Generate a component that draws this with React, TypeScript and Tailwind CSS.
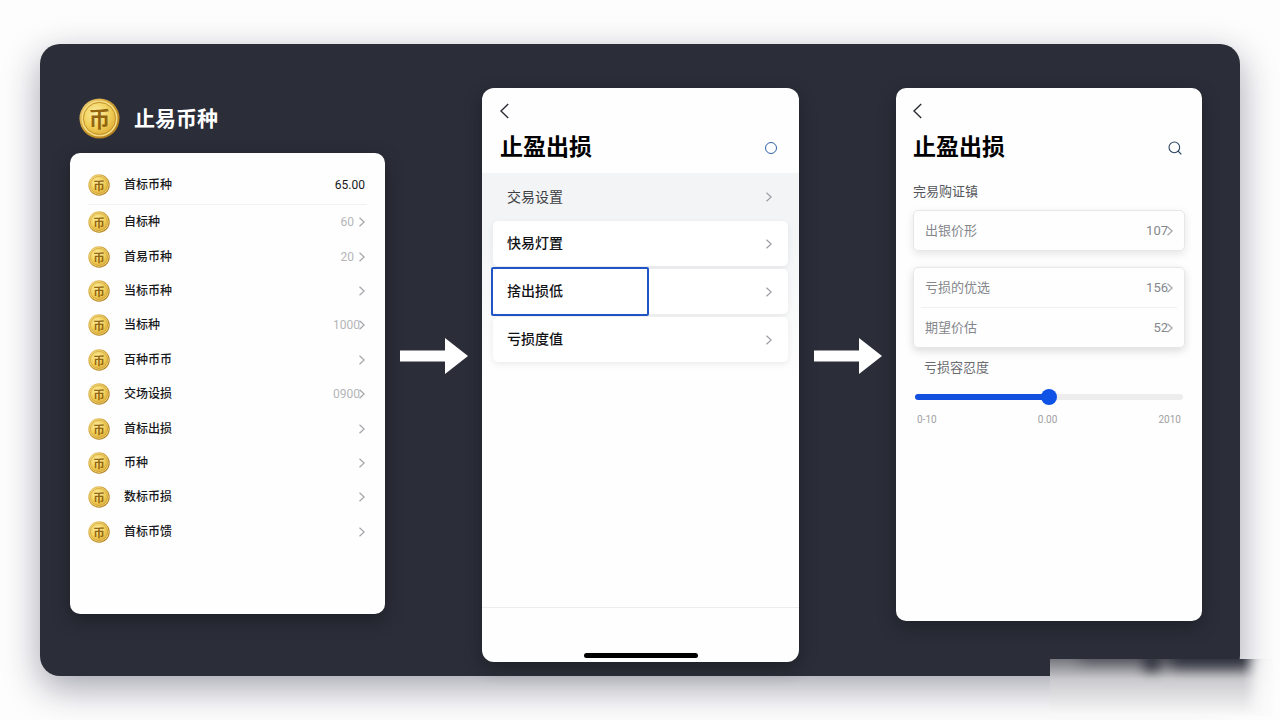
import { useState } from "react";
import { Search } from "lucide-react";

/**
 * A single row in the coin list
 * @interface CoinRow
 * @property {string} name - Label of the row
 * @property {string} value - Optional amount drawn on the right
 * @property {boolean} tight - Long amounts sit right up against the chevron
 */
interface CoinRow {
  name: string;
  value?: string;
  tight?: boolean;
}

const coins: CoinRow[] = [
  { name: "自标种", value: "60" },
  { name: "首易币种", value: "20" },
  { name: "当标币种" },
  { name: "当标种", value: "1000", tight: true },
  { name: "百种币币" },
  { name: "交场设损", value: "0900", tight: true },
  { name: "首标出损" },
  { name: "币种" },
  { name: "数标币损" },
  { name: "首标币馈" },
];

const settings = [
  { name: "快易灯置", selected: false },
  { name: "捨出损低", selected: true },
  { name: "亏损度值", selected: false },
];

/** Gold coin with the currency character in the middle */
function Coin({ className }: { className: string }) {
  return (
    <svg viewBox="0 0 42 42" className={className} aria-hidden="true">
      <defs>
        <linearGradient id="rim" x1="0" y1="0" x2="1" y2="1">
          <stop offset="0" stopColor="#f3d67a" />
          <stop offset="0.5" stopColor="#c9982e" />
          <stop offset="1" stopColor="#a87416" />
        </linearGradient>
        <radialGradient id="face" cx="0.4" cy="0.35" r="0.75">
          <stop offset="0" stopColor="#fdf0a8" />
          <stop offset="0.6" stopColor="#f0cd55" />
          <stop offset="1" stopColor="#d9a532" />
        </radialGradient>
      </defs>
      <circle cx="21" cy="21" r="20.5" fill="url(#rim)" />
      <circle cx="21" cy="21" r="18.5" fill="#f5dc80" />
      <circle cx="21" cy="21" r="16.5" fill="url(#face)" stroke="#c08f28" strokeWidth="1" />
      <text x="21" y="30" textAnchor="middle" fontSize="22" fontWeight="700" fill="#93650f">
        币
      </text>
    </svg>
  );
}

function Chevron({ className = "" }: { className?: string }) {
  return (
    <svg
      viewBox="0 0 6 10"
      className={`h-[10px] w-[6px] shrink-0 ${className}`}
      fill="none"
      stroke="currentColor"
      strokeWidth="1.2"
      aria-hidden="true"
    >
      <path d="M0.5 0.8 5.2 5 0.5 9.2" />
    </svg>
  );
}

/** Block arrow between two screens */
function StepArrow() {
  return (
    <svg viewBox="0 0 68 36" className="mt-[250px] h-9 w-[68px] justify-self-center" aria-hidden="true">
      <path d="M0 12.5H45V0L68 18 45 36V23.5H0Z" fill="#fff" />
    </svg>
  );
}

function BackButton() {
  return (
    <button type="button" aria-label="返回" className="flex h-4 w-4 items-center text-[#2a2d33]">
      <svg viewBox="0 0 9 16" className="h-4 w-[9px]" fill="none" stroke="currentColor" strokeWidth="1.4">
        <path d="M8.2 1 1 8l7.2 7" />
      </svg>
    </button>
  );
}

/** Left column: coin list */
function CoinScreen() {
  return (
    <section className="pt-[10px]">
      <header className="mb-[14px] flex items-center gap-[14px] pl-[9px]">
        <Coin className="size-[41px]" />
        <h1 className="text-[21px] leading-6 font-bold text-white">止易币种</h1>
      </header>
      <div className="min-h-[461px] rounded-[10px] bg-[#fefefe] px-[18px] pt-3 shadow-[0_6px_18px_rgba(0,0,0,0.35)]">
        <div className="flex h-10 items-center border-b border-[#f1f1f2] text-[12px] text-[#17181b]">
          <Coin className="mr-[14px] size-[22px]" />
          <span className="flex-1 font-medium">首标币种</span>
          <span className="pr-[2px]">65.00</span>
        </div>
        <div className="grid h-[344px] auto-rows-fr">
          {coins.map((coin) => (
            <button key={coin.name} type="button" className="flex items-center text-left text-[12px]">
              <Coin className="mr-[14px] size-[22px]" />
              <span className="flex-1 font-medium text-[#17181b]">{coin.name}</span>
              <span className="text-[#b4b5b8]">{coin.value}</span>
              <Chevron className={`mr-[2px] text-[#a3a4a8] ${coin.tight ? "-ml-[1px]" : "ml-[5px]"}`} />
            </button>
          ))}
        </div>
      </div>
    </section>
  );
}

/** Middle column: settings menu */
function SettingsScreen() {
  return (
    <section className="flex min-h-[574px] flex-col overflow-hidden rounded-[12px] bg-[#fefefe] shadow-[0_6px_18px_rgba(0,0,0,0.3)]">
      <header className="h-[85px] px-[18px] pt-[15px]">
        <BackButton />
        <div className="mt-[15px] flex items-center justify-between">
          <h2 className="text-[23px] leading-7 font-bold text-black">止盈出损</h2>
          <button type="button" aria-label="状态" className="mr-1 size-3 rounded-full border border-[#2f62a8]" />
        </div>
      </header>
      <div className="bg-linear-to-b from-[#f3f4f6] from-30% to-[#fefefe] px-[11px] pb-4 text-[14px] font-medium">
        <button type="button" className="flex h-12 w-full items-center justify-between pr-4 pl-[14px] text-[#3c3e43]">
          <span className="font-normal">交易设置</span>
          <Chevron className="text-[#9b9da2]" />
        </button>
        <div className="grid gap-[3px]">
          {settings.map((item) => (
            <button
              key={item.name}
              type="button"
              className="relative flex h-[45px] w-full items-center justify-between rounded-[5px] bg-white pr-4 pl-[14px] text-[#111215] shadow-[0_2px_6px_rgba(0,0,0,0.07)]"
            >
              <span>{item.name}</span>
              <Chevron className="text-[#9b9da2]" />
              {/* Selection frame lies over the left half of the row */}
              {item.selected && (
                <span className="absolute -inset-y-[2px] -left-[2px] w-[158px] rounded-[2px] border-2 border-[#1f55c4]" />
              )}
            </button>
          ))}
        </div>
      </div>
      <footer className="mt-auto flex h-[55px] items-end justify-center border-t border-[#ececee] pb-1">
        <div className="h-[5px] w-[114px] rounded-full bg-black" />
      </footer>
    </section>
  );
}

interface FieldProps {
  label: string;
  value: string;
}

function Field({ label, value }: FieldProps) {
  return (
    <button type="button" className="flex h-[39px] w-full items-center px-1 text-[13px] text-[#85878c]">
      <span className="flex-1 text-left">{label}</span>
      <span>{value}</span>
      <Chevron className="-ml-[1px] text-[#a3a4a8]" />
    </button>
  );
}

/** Right column: price form with the tolerance slider */
function FormScreen() {
  const [tolerance, setTolerance] = useState(50);

  return (
    <section className="min-h-[533px] self-start rounded-[10px] bg-[#fefefe] px-[17px] pt-[15px] shadow-[0_6px_18px_rgba(0,0,0,0.3)]">
      <BackButton />
      <div className="mt-[15px] flex items-center justify-between">
        <h2 className="text-[23px] leading-7 font-bold text-black">止盈出损</h2>
        <button type="button" aria-label="搜索" className="mr-[2px] text-[#26415f]">
          <Search className="size-4" strokeWidth={1.6} />
        </button>
      </div>
      <h3 className="mt-5 text-[13px] leading-5 text-[#55575c]">完易购证镇</h3>
      <div className="mt-2 rounded-[5px] border border-[#e6e7e9] px-[7px] shadow-[0_3px_8px_rgba(0,0,0,0.1)]">
        <Field label="出银价形" value="107" />
      </div>
      <div className="mt-4 rounded-[5px] border border-[#e6e7e9] px-[7px] shadow-[0_3px_8px_rgba(0,0,0,0.14)]">
        <Field label="亏损的优选" value="156" />
        <div className="border-t border-[#f0f0f1]" />
        <Field label="期望价估" value="52" />
      </div>
      <label htmlFor="tolerance" className="mt-[10px] block pl-[11px] text-[13px] leading-5 text-[#6a6c71]">
        亏损容忍度
      </label>
      <div className="px-[2px] pt-4">
        <input
          id="tolerance"
          type="range"
          min={0}
          max={100}
          value={tolerance}
          onChange={(e) => setTolerance(Number(e.target.value))}
          className="block h-[6px] w-full appearance-none rounded-full [&::-webkit-slider-thumb]:size-4 [&::-webkit-slider-thumb]:appearance-none [&::-webkit-slider-thumb]:rounded-full [&::-webkit-slider-thumb]:bg-[#0f52e6]"
          style={{ background: `linear-gradient(to right, #1250dd ${tolerance}%, #ededee ${tolerance}%)` }}
        />
        <div className="mt-3 flex justify-between px-[2px] text-[10px] leading-4 text-[#a0a1a5]">
          <span>0-10</span>
          <span>0.00</span>
          <span>2010</span>
        </div>
      </div>
    </section>
  );
}

export default function App() {
  return (
    <div className="relative min-h-screen overflow-hidden bg-[#fdfdfd] px-10 py-11 font-[Roboto,'Noto_Sans_CJK_SC',sans-serif]">
      <main className="grid grid-cols-[315fr_97fr_317fr_97fr_306fr] rounded-[20px] bg-[#2b2e39] pt-11 pr-[38px] pb-[14px] pl-[30px] shadow-[0_12px_36px_rgba(30,30,60,0.4)]">
        <CoinScreen />
        <StepArrow />
        <SettingsScreen />
        <StepArrow />
        <FormScreen />
      </main>
      {/* Frosted patch over the bottom right corner */}
      <div className="absolute right-1 bottom-1 h-[57px] w-[226px] overflow-hidden bg-linear-to-b from-[#77787f] via-[#c9c9cd] via-35% to-[#fafafa] mask-r-from-85%">
        <div className="absolute -top-4 left-[30px] h-5 w-[180px] bg-[#2b2e39] opacity-50 blur-[7px]" />
        <div className="absolute -top-2 left-[94px] h-5 w-4 bg-[#2b2e39] opacity-90 blur-[6px]" />
        <div className="absolute -top-4 left-[120px] h-6 w-[80px] bg-[#2b2e39] opacity-90 blur-[7px]" />
        <div className="absolute -top-2 left-[204px] h-16 w-10 bg-[#f4f4f5] blur-[6px]" />
      </div>
    </div>
  );
}
